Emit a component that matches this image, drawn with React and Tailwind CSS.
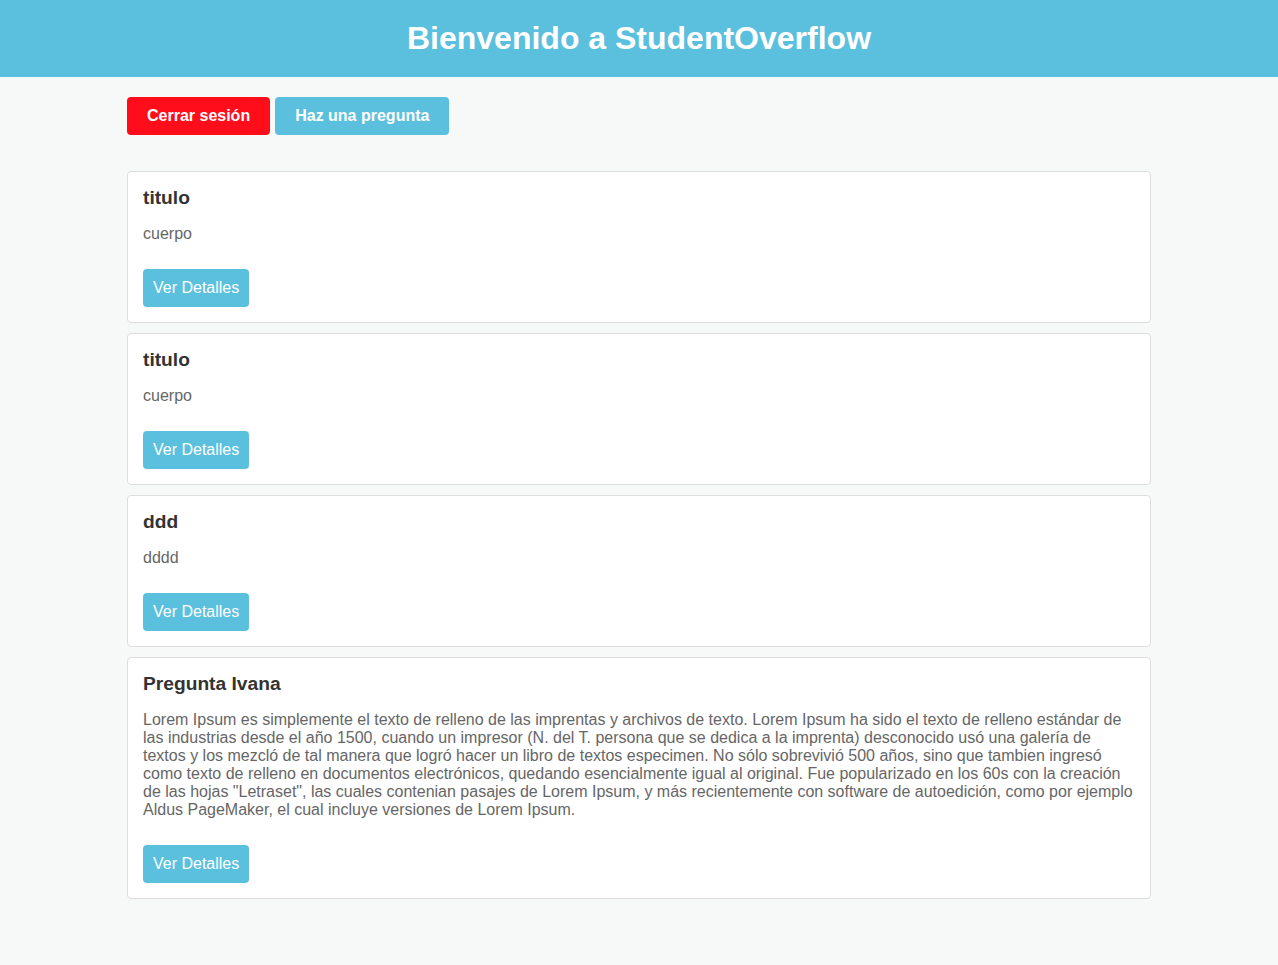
import React from "react";

const posts = [
  { t: "titulo", b: "cuerpo" },
  { t: "titulo", b: "cuerpo" },
  { t: "ddd", b: "dddd" },
  {
    t: "Pregunta Ivana",
    b: 'Lorem Ipsum es simplemente el texto de relleno de las imprentas y archivos de texto. Lorem Ipsum ha sido el texto de relleno estándar de las industrias desde el año 1500, cuando un impresor (N. del T. persona que se dedica a la imprenta) desconocido usó una galería de textos y los mezcló de tal manera que logró hacer un libro de textos especimen. No sólo sobrevivió 500 años, sino que tambien ingresó como texto de relleno en documentos electrónicos, quedando esencialmente igual al original. Fue popularizado en los 60s con la creación de las hojas "Letraset", las cuales contenian pasajes de Lorem Ipsum, y más recientemente con software de autoedición, como por ejemplo Aldus PageMaker, el cual incluye versiones de Lorem Ipsum.',
  },
];

export default function App() {
  return (
    <div
      className="min-h-[965px] bg-[#f7f9f9] text-[#333]"
      style={{ fontFamily: '"Liberation Sans", Arial, sans-serif' }}
    >
      <header className="h-[77px] bg-[#5bc0de] flex items-center justify-center">
        <h1 className="text-[32px] font-bold text-white leading-[37px]">
          Bienvenido a StudentOverflow
        </h1>
      </header>
      <main className="w-[1024px] mx-auto pt-[20px]">
        <div className="flex gap-[5px]">
          <button className="h-[38px] px-5 rounded bg-[#ff0d1a] text-white font-bold text-base leading-[18px]">
            Cerrar sesión
          </button>
          <button className="h-[38px] px-5 rounded bg-[#5bc0de] text-white font-bold text-base leading-[18px]">
            Haz una pregunta
          </button>
        </div>
        <div className="mt-[36px] flex flex-col gap-[10px]">
          {posts.map((p, i) => (
            <div
              key={i}
              className="bg-white border border-[#dddddd] rounded p-[15px] flex flex-col items-start"
            >
              <h3 className="text-[19.2px] font-bold leading-[22px] text-[#333]">
                {p.t}
              </h3>
              <p className="mt-[16px] text-base leading-[18px] text-[#666]">
                {p.b}
              </p>
              <button className="mt-[26px] h-[38px] px-[10px] rounded bg-[#5bc0de] text-white text-base leading-[18px]">
                Ver Detalles
              </button>
            </div>
          ))}
        </div>
      </main>
    </div>
  );
}
